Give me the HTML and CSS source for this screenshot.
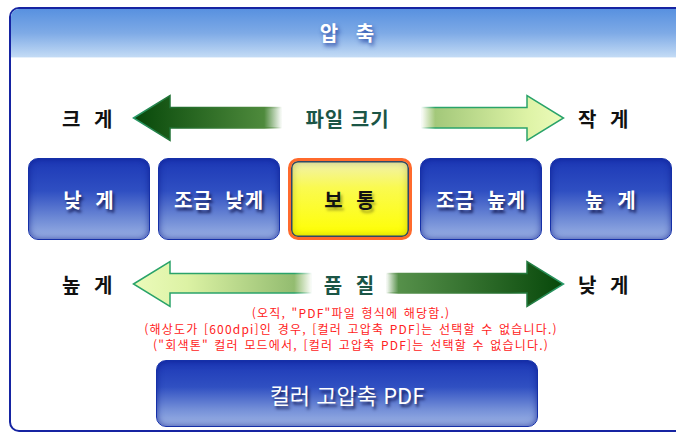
FILE: index.html
```html
<!DOCTYPE html>
<html lang="ko">
<head>
  <meta charset="UTF-8" />
  <title>압축</title>
  <link rel="stylesheet" href="styles.css">
</head>
<body>
  <div class="panel">
    <div class="header">압 축</div>
    <div class="content">

      <div class="scale-row row-size">
        <div class="side-label">크 게</div>
        <svg class="arrow" width="150" height="48" viewBox="0 0 150 48">
          <defs>
            <linearGradient id="g1f" x1="0" y1="0" x2="1" y2="0">
              <stop offset="0" stop-color="#07480a"/>
              <stop offset="0.88" stop-color="#4e8a3c"/>
              <stop offset="1" stop-color="#4e8a3c" stop-opacity="0"/>
            </linearGradient>
            <linearGradient id="g1s" x1="0" y1="0" x2="1" y2="0">
              <stop offset="0" stop-color="#2b9c6c"/>
              <stop offset="0.3" stop-color="#1f6a2a"/>
              <stop offset="0.88" stop-color="#4e8a3c"/>
              <stop offset="1" stop-color="#4e8a3c" stop-opacity="0"/>
            </linearGradient>
          </defs>
          <polygon points="1.5,24 38,1.5 38,13.5 150,13.5 150,34 38,34 38,46.5" fill="url(#g1f)" stroke="url(#g1s)" stroke-width="1.5"/>
        </svg>
        <div class="mid-label mid-size">파일 크기</div>
        <svg class="arrow" width="144" height="48" viewBox="0 0 144 48">
          <defs>
            <linearGradient id="g2f" x1="0" y1="0" x2="1" y2="0">
              <stop offset="0" stop-color="#9fc676" stop-opacity="0"/>
              <stop offset="0.1" stop-color="#a3c87a"/>
              <stop offset="0.75" stop-color="#def3a6"/>
              <stop offset="1" stop-color="#ecfbbb"/>
            </linearGradient>
            <linearGradient id="g2s" x1="0" y1="0" x2="1" y2="0">
              <stop offset="0" stop-color="#2aa36a" stop-opacity="0"/>
              <stop offset="0.1" stop-color="#2aa36a"/>
              <stop offset="1" stop-color="#2aa36a"/>
            </linearGradient>
          </defs>
          <polygon points="0,13.5 106,13.5 106,1.5 142.5,24 106,46.5 106,34 0,34" fill="url(#g2f)" stroke="url(#g2s)" stroke-width="1.5"/>
        </svg>
        <div class="side-label right">작 게</div>
      </div>

      <div class="levels">
        <div class="level-btn">낮 게</div>
        <div class="level-btn">조금 낮게</div>
        <div class="level-btn selected">보 통</div>
        <div class="level-btn">조금 높게</div>
        <div class="level-btn">높 게</div>
      </div>

      <div class="scale-row row-quality">
        <div class="side-label">높 게</div>
        <svg class="arrow" width="180" height="48" viewBox="0 0 180 48">
          <defs>
            <linearGradient id="g3f" x1="0" y1="0" x2="1" y2="0">
              <stop offset="0" stop-color="#ecfbbb"/>
              <stop offset="0.3" stop-color="#dcf2a4"/>
              <stop offset="0.9" stop-color="#93bc70"/>
              <stop offset="1" stop-color="#93bc70" stop-opacity="0"/>
            </linearGradient>
            <linearGradient id="g3s" x1="0" y1="0" x2="1" y2="0">
              <stop offset="0" stop-color="#2aa36a"/>
              <stop offset="0.9" stop-color="#2aa36a"/>
              <stop offset="1" stop-color="#2aa36a" stop-opacity="0"/>
            </linearGradient>
          </defs>
          <polygon points="1.5,24 38,1.5 38,13.5 180,13.5 180,33 38,33 38,46.5" fill="url(#g3f)" stroke="url(#g3s)" stroke-width="1.5"/>
        </svg>
        <div class="mid-label mid-quality">품 질</div>
        <svg class="arrow" width="179" height="48" viewBox="0 0 179 48">
          <defs>
            <linearGradient id="g4f" x1="0" y1="0" x2="1" y2="0">
              <stop offset="0" stop-color="#5a9448" stop-opacity="0"/>
              <stop offset="0.07" stop-color="#56904a"/>
              <stop offset="1" stop-color="#07480a"/>
            </linearGradient>
            <linearGradient id="g4s" x1="0" y1="0" x2="1" y2="0">
              <stop offset="0" stop-color="#56904a" stop-opacity="0"/>
              <stop offset="0.07" stop-color="#56904a"/>
              <stop offset="0.7" stop-color="#1f6a2a"/>
              <stop offset="1" stop-color="#2b9c6c"/>
            </linearGradient>
          </defs>
          <polygon points="0,13.5 141,13.5 141,1.5 177.5,24 141,46.5 141,33 0,33" fill="url(#g4f)" stroke="url(#g4s)" stroke-width="1.5"/>
        </svg>
        <div class="side-label right">낮 게</div>
      </div>

      <div class="notes">
        <p>(오직, "PDF"파일 형식에 해당함.)</p>
        <p>(해상도가 [600dpi]인 경우, [컬러 고압축 PDF]는 선택할 수 없습니다.)</p>
        <p>("회색톤" 컬러 모드에서, [컬러 고압축 PDF]는 선택할 수 없습니다.)</p>
      </div>

      <div class="pdf-btn">컬러 고압축 PDF</div>
    </div>
  </div>
</body>
</html>
```

FILE: styles.css
```css
html, body {
  margin: 0;
  padding: 0;
  overflow: hidden;
  background: white;
}
body {
  font-family: "Noto Sans CJK KR", "Noto Sans", sans-serif;
  width: 676px;
  height: 432px;
}
.panel {
  margin: 7px 0 0 9px;
  width: 676px;
  height: 425px;
  box-sizing: border-box;
  border: 2px solid #1624a2;
  border-radius: 10px 10px 0 10px;
  overflow: hidden;
  background: white;
}
.header {
  height: 49px;
  line-height: 48px;
  text-align: center;
  color: white;
  font-size: 20px;
  font-weight: bold;
  word-spacing: 12px;
  background: linear-gradient(to bottom, #5891e0 0%, #7eaae6 50%, #c3dbf5 100%);
  border-bottom: 1px solid #e6f0fb;
  box-sizing: border-box;
  text-shadow: 2px 3px 4px rgba(20, 50, 150, 0.8);
}
.content {
  padding: 36px 0 0 0;
}
.scale-row {
  display: flex;
  align-items: center;
  height: 48px;
  padding-left: 51px;
}
.arrow {
  display: block;
  flex: none;
  overflow: visible;
}
.side-label {
  width: 70px;
  flex: none;
  font-size: 20px;
  font-weight: bold;
  color: #111;
  word-spacing: 8px;
}
.side-label.right {
  width: auto;
  margin-left: 13px;
}
.mid-label {
  flex: none;
  text-align: center;
  font-size: 20px;
  font-weight: bold;
  color: #1b5546;
}
.mid-size {
  width: 131px;
  padding-right: 8px;
  letter-spacing: 1px;
}
.mid-quality {
  width: 74px;
  word-spacing: 8px;
}
.levels {
  display: flex;
  gap: 8px;
  margin: 16px 0 0 17px;
}
.level-btn {
  width: 122px;
  height: 82px;
  box-sizing: border-box;
  display: flex;
  align-items: center;
  justify-content: center;
  border: 1px solid #1530a8;
  border-radius: 10px;
  background: linear-gradient(to bottom, #1c38b6 0%, #2f4fc2 40%, #6f8bd6 75%, #9bb1e4 100%);
  box-shadow: inset 0 0 6px rgba(10, 25, 140, 0.7);
  color: white;
  font-size: 20px;
  font-weight: bold;
  letter-spacing: 1px;
  word-spacing: 6px;
  text-shadow: 2px 3px 3px rgba(0, 0, 50, 0.7);
}
.level-btn.selected {
  width: 124px;
  border: 3px solid #ff6a2c;
  background: linear-gradient(to bottom, #f1f1b2 0%, #fafa50 35%, #ffff00 100%);
  box-shadow: inset 0 0 0 1.5px #2f4866, inset 0 0 8px rgba(80, 80, 0, 0.4);
  color: #111;
  text-shadow: 2px 3px 3px rgba(0, 0, 0, 0.35);
}
.row-quality {
  margin-top: 21px;
  height: 46px;
}
.notes {
  margin-top: -2px;
  text-align: center;
  color: #ff2222;
  font-size: 12px;
  letter-spacing: 1.2px;
  word-spacing: 1px;
  padding-left: 8px;
}
.notes p {
  margin: 0;
  line-height: 16px;
}
.pdf-btn {
  width: 382px;
  height: 67px;
  margin: 7px auto 0 auto;
  box-sizing: border-box;
  display: flex;
  align-items: center;
  justify-content: center;
  border: 1px solid #1530a8;
  border-radius: 10px;
  background: linear-gradient(to bottom, #1c38b6 0%, #3050c2 40%, #7590d8 75%, #9db3e5 100%);
  box-shadow: inset 0 0 6px rgba(10, 25, 140, 0.7);
  color: white;
  font-size: 22px;
  text-shadow: 2px 3px 3px rgba(0, 0, 50, 0.7);
}
```
